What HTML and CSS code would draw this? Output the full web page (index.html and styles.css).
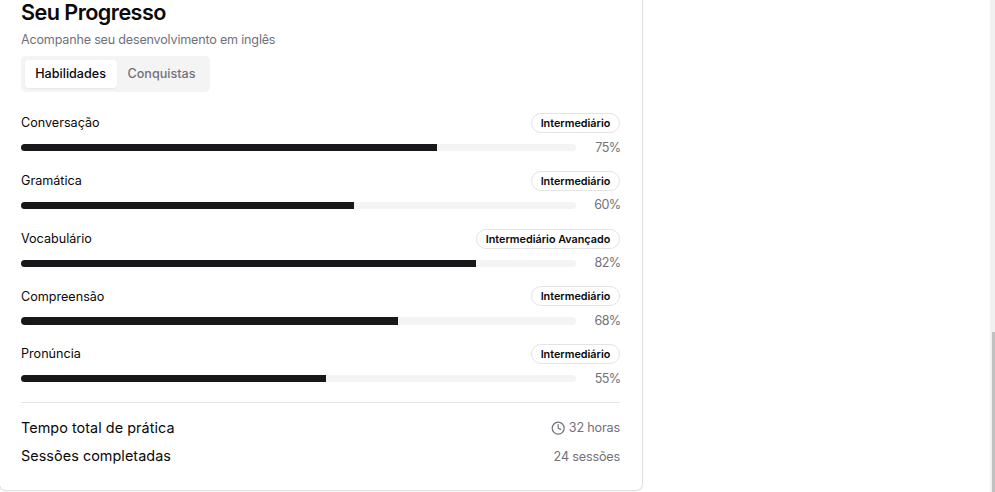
FILE: index.html
```html
<!DOCTYPE html>
<html lang="pt-BR">
<head>
<meta charset="utf-8">
<title>Seu Progresso</title>
<link rel="stylesheet" href="styles.css">
</head>
<body>
<main class="card">
  <h2 class="title">Seu Progresso</h2>
  <p class="subtitle">Acompanhe seu desenvolvimento em inglês</p>
  <div class="tabs">
    <button class="tab tab-active">Habilidades</button>
    <button class="tab tab-idle">Conquistas</button>
  </div>
  <section class="skills">
    <div class="skill">
      <div class="skill-head"><span class="name">Conversação</span><span class="badge">Intermediário</span></div>
      <div class="meter"><div class="track"><div class="fill" style="width:75%"></div></div><span class="percent">75%</span></div>
    </div>
    <div class="skill">
      <div class="skill-head"><span class="name">Gramática</span><span class="badge">Intermediário</span></div>
      <div class="meter"><div class="track"><div class="fill" style="width:60%"></div></div><span class="percent">60%</span></div>
    </div>
    <div class="skill">
      <div class="skill-head"><span class="name">Vocabulário</span><span class="badge badge-wide">Intermediário Avançado</span></div>
      <div class="meter"><div class="track"><div class="fill" style="width:82%"></div></div><span class="percent">82%</span></div>
    </div>
    <div class="skill">
      <div class="skill-head"><span class="name">Compreensão</span><span class="badge">Intermediário</span></div>
      <div class="meter"><div class="track"><div class="fill" style="width:68%"></div></div><span class="percent">68%</span></div>
    </div>
    <div class="skill">
      <div class="skill-head"><span class="name">Pronúncia</span><span class="badge">Intermediário</span></div>
      <div class="meter"><div class="track"><div class="fill" style="width:55%"></div></div><span class="percent">55%</span></div>
    </div>
  </section>
  <section class="totals">
    <div class="total"><span class="total-name">Tempo total de prática</span>
      <span class="total-value"><svg class="clock" viewBox="0 0 24 24"><circle cx="12" cy="12" r="10"/><path d="M12 6v6l4 2"/></svg><span class="hours">32 horas</span></span></div>
    <div class="total"><span class="total-name">Sessões completadas</span><span class="total-value sessions">24 sessões</span></div>
  </section>
</main>
<div class="scrollbar"><div class="thumb"></div></div>
</body>
</html>
```

FILE: styles.css
```css
* { box-sizing: border-box; }
body {
  margin: 0;
  height: 492px;
  overflow: hidden;
  display: flex;
  justify-content: space-between;
  background: #fff;
  color: #09090b;
  font-family: Inter, "Liberation Sans", sans-serif;
}
.card {
  width: 644px;
  height: 491px;
  margin-left: -1px;
  padding: 0 22px 0 21px;
  border: 1px solid #e2e2e5;
  border-top: 0;
  border-radius: 0 0 7px 7px;
  box-shadow: 0 1px 2px rgba(0, 0, 0, .05);
  white-space: nowrap;
}
.title { margin: 0; height: 31px; font-size: 21.6px; line-height: 24px; font-weight: 600; letter-spacing: -.54px; }
.subtitle { margin: 0; height: 25px; font-size: 12.6px; line-height: 18px; letter-spacing: -.2px; color: #71717a; }
.tabs { display: flex; width: 189px; height: 36px; padding: 3.6px; border-radius: 5px; background: #f4f4f5; }
.tab { border: 0; padding: 0; background: none; font: 500 12.6px/28px Inter, sans-serif; }
.tab-active { width: 92px; background: #fff; border-radius: 4px; color: #09090b; box-shadow: 0 1px 2px rgba(0, 0, 0, .06); }
.tab-idle { flex: 1; color: #71717a; }
.skills { display: grid; gap: 14.2px; margin-top: 21px; }
.skill-head { display: flex; justify-content: space-between; align-items: center; height: 20px; }
.name { font-size: 12.6px; line-height: 18px; font-weight: 400; padding-top: .4px; }
.badge { width: 89px; height: 20px; border: 1px solid #e4e4e7; border-radius: 10px; font-size: 10.8px; line-height: 19px; font-weight: 600; text-align: center; }
.badge-wide { width: 144px; }
.meter { display: flex; align-items: center; justify-content: space-between; height: 18px; margin-top: 5.6px; }
.track { width: 555px; height: 7.2px; border-radius: 4px; overflow: hidden; background: #f4f4f5; }
.fill { height: 100%; background: #18181b; }
.percent { margin-right: -.6px; font-size: 12.6px; line-height: 18px; letter-spacing: -.6px; color: #71717a; }
.totals { margin-top: 14px; border-top: 1px solid #e4e4e7; padding-top: 11px; }
.total { display: flex; justify-content: space-between; align-items: center; height: 28.4px; }
.total-name { font-size: 14.4px; line-height: 22px; font-weight: 400; letter-spacing: .05px; }
.total-value { display: flex; align-items: center; gap: 3.4px; font-size: 12.6px; letter-spacing: -.16px; color: #71717a; }
.clock { width: 14.4px; height: 14.4px; fill: none; stroke: currentColor; stroke-width: 2; stroke-linecap: round; stroke-linejoin: round; }
.scrollbar { width: 5px; height: 492px; padding: 332px 0 0 2px; background: #f1f1f1; }
.thumb { height: 160px; background: #c1c1c1; }
```
